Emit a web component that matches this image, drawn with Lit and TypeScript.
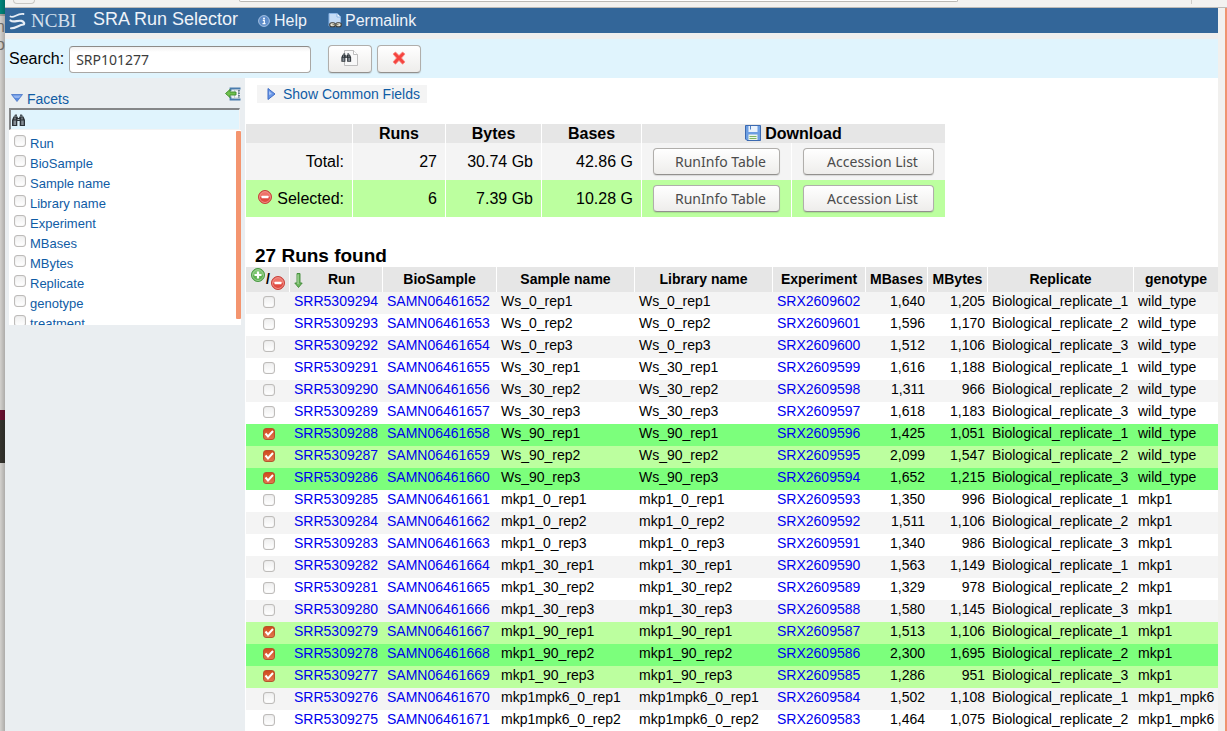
import { LitElement, html, css, svg } from "lit";
import { customElement, state } from "lit/decorators.js";
import { classMap } from "lit/directives/class-map.js";

interface Run {
  run: number;
  bio: number;
  name: string;
  exp: number;
  mbases: string;
  mbytes: string;
  rep: number;
  genotype: string;
}

const SIZES: [string, string][] = [
  ["1,640", "1,205"], ["1,596", "1,170"], ["1,512", "1,106"], ["1,616", "1,188"],
  ["1,311", "966"], ["1,618", "1,183"], ["1,425", "1,051"], ["2,099", "1,547"],
  ["1,652", "1,215"], ["1,350", "996"], ["1,511", "1,106"], ["1,340", "986"],
  ["1,563", "1,149"], ["1,329", "978"], ["1,580", "1,145"], ["1,513", "1,106"],
  ["2,300", "1,695"], ["1,286", "951"], ["1,502", "1,108"], ["1,464", "1,075"],
];
const GROUPS: [string, string][] = [
  ["Ws_0", "wild_type"], ["Ws_30", "wild_type"], ["Ws_90", "wild_type"],
  ["mkp1_0", "mkp1"], ["mkp1_30", "mkp1"], ["mkp1_90", "mkp1"], ["mkp1mpk6_0", "mkp1_mpk6"],
];
const RUNS: Run[] = SIZES.map(([mbases, mbytes], i) => {
  const [prefix, genotype] = GROUPS[Math.floor(i / 3)];
  const rep = (i % 3) + 1;
  return { run: 5309294 - i, bio: 6461652 + i, name: `${prefix}_rep${rep}`, exp: 2609602 - i, mbases, mbytes, rep, genotype };
});

const FACETS = ["Run", "BioSample", "Sample name", "Library name", "Experiment", "MBases", "MBytes", "Replicate", "genotype", "treatment"];

const binoculars = svg`
  <path d="M2.500 3.500h3v-2h-2zM8.500 1.500h2l1 2h-3z" fill="#4b545b"/>
  <path d="M2 3.500h4l.5 1.500h1L8 3.500h4l1.500 3.500v6H8.200V8H5.800v5H.5V7z" fill="#2d3338"/>
  <path d="M2 7.500h2.500V12H2zM9.700 7.500h2.500V12H9.700z" fill="#858d94"/>
  <path d="M3.500 4.500v2M10.500 4.500v2M6 6.500h2" stroke="#a9b1b7" fill="none"/>`;

const minusIcon = html`<svg class="round" viewBox="0 0 14 14" width="14" height="14" aria-hidden="true">
  <circle cx="7" cy="7" r="6.500" fill="#d9483f" stroke="#c8423b"/>
  <circle cx="7" cy="7" r="5.400" fill="#ee7369" stroke="#f4a19a" stroke-width=".8"/>
  <path d="M2 7a5 5 0 0 0 10 0z" fill="#e04a40"/>
  <rect x="3.500" y="5.700" width="7" height="2.600" rx=".5" fill="#fff"/>
</svg>`;

const plusIcon = html`<svg class="round" viewBox="0 0 14 14" width="14" height="14" aria-hidden="true">
  <circle cx="7" cy="7" r="6.500" fill="#58a84e" stroke="#4b9a44"/>
  <circle cx="7" cy="7" r="5.400" fill="#7cc46f" stroke="#abdca2" stroke-width=".8"/>
  <path d="M2 7a5 5 0 0 0 10 0z" fill="#5fb152"/>
  <path d="M7 3.500v7M3.500 7h7" stroke="#fff" stroke-width="2.200"/>
</svg>`;

@customElement("app-root")
export class AppRoot extends LitElement {
  @state() private selected = new Set([6, 7, 8, 15, 16, 17]);

  static styles = css`
    * { box-sizing: border-box; }
    :host {
      display: flex; height: 100vh; overflow: hidden; color: #000;
      font: 16px/18px "Liberation Sans", Arial, sans-serif; background: #fff;
    }
    .behind {
      flex: none; width: 5px; overflow: hidden; padding-top: 18px; color: #6d6c69;
      direction: rtl;
      background:
        linear-gradient(90deg, transparent, rgba(0,0,0,.18)),
        linear-gradient(#00857b 14px, #a5a39f 14px, #a5a39f 16px, #d3d1ce 16px, #d3d1ce 410px, #6b1030 410px, #6b1030 420px, #35342e 420px, #35342e 463px, #d3d1ce 463px);
    }
    .behind span { display: block; }
    .window { flex: 1; min-width: 0; display: flex; flex-direction: column; }
    .chrome {
      flex: none; height: 8px; background: #f3f2f0; border-bottom: 1px solid #bdbbb8;
      display: flex; overflow: hidden; align-items: flex-start;
    }
    .back { width: 22px; height: 4px; margin-left: 8px; border: 1px solid #c9c7c3; border-top: 0; border-radius: 0 0 11px 11px; }
    .address { flex: 1; height: 2px; margin: 0 233px 0 204px; background: #fff; border: 1px solid #bbb9b5; border-top: 0; border-radius: 0 0 3px 3px; }
    .divider { width: 1px; height: 4px; background: #cfcdca; margin-right: 35px; }
    .frame { flex: 1; min-height: 0; display: flex; }
    .page { flex: 1; min-width: 0; display: flex; flex-direction: column; background: #fff; }
    .gutter { flex: none; width: 9px; background: #f1f0ee; border-right: 2px solid #f0936f; }

    .top { flex: none; height: 25px; background: #369; color: #fff; display: flex; align-items: center; }
    .top a { color: #eef3f9; text-decoration: none; display: flex; align-items: center; }
    .top .brand { font: 19px/20px "Liberation Serif", serif; gap: 4px; padding-left: 4px; width: 88px; color: #d6e1ed; }
    .title { font-size: 18px; line-height: 22px; padding-bottom: 3px; width: 165px; color: #eef3f9; }
    .help { gap: 4px; width: 70px; }
    .perma { gap: 3px; }
    .search {
      flex: none; height: 45px; border-top: 6px solid #eee; background: #e0f4fd;
      display: flex; align-items: center; padding: 1px 4px 0; gap: 5px;
    }
    .query {
      width: 242px; height: 27px; padding: 1px 6px 0; border: 1px solid #a9a7a4; border-top-color: #8d8b88; border-radius: 4px;
      background: linear-gradient(#f1f1f1, #fff 5px); color: #3c3c3c; font: 14px/20px "Noto Sans", sans-serif; margin-right: 12px;
    }
    button { cursor: pointer; color: #4c4c4c; font: 14px/20px "Noto Sans", sans-serif; }
    .btn {
      border: 1px solid #b0aeab; border-bottom-color: #92908d; border-radius: 4px; padding: 0;
      background: linear-gradient(#fff, #eeedeb); box-shadow: 0 1px 1px rgba(0,0,0,.12);
    }
    .tool { width: 44px; height: 28px; display: flex; align-items: center; justify-content: center; padding-bottom: 3px; }
    .body { flex: 1; min-height: 0; display: flex; }

    .side { flex: none; width: 240px; background: #eaeef1; padding: 0 4px; }
    .plain { border: 0; background: none; padding: 0; color: #0f5ca5; font: 14px/18px "Liberation Sans", Arial, sans-serif; display: flex; align-items: center; }
    .facethead { height: 30px; display: flex; justify-content: space-between; padding: 10px 0 0 2px; }
    .facethead .plain { gap: 4px; height: 22px; }
    .facethead .collapse { height: 12px; }
    .filter { display: flex; align-items: center; height: 22px; width: 231px; background: #e0f4fd; border: 2px solid #848688; border-right: 1px solid #f3f3f3; border-bottom: 1px solid #f3f3f3; }
    .filter input { flex: 1; min-width: 0; border: 0; background: none; outline: 0; height: 17px; padding: 0; }
    .facets { display: flex; height: 195px; background: #fff; padding: 1px 0 0; overflow: hidden; }
    .list { flex: 1; list-style: none; margin: 0; padding: 2px 0 0 5px; color: #0f5ca5; font-size: 13px; line-height: 20px; }
    .list label { display: flex; gap: 4px; height: 20px; align-items: flex-start; }
    .list span { padding-top: 2px; line-height: 18px; }
    .thumb { width: 5px; height: 188px; background: #f4956f; border-radius: 1px; }

    .tick {
      appearance: none; flex: none; display: block; width: 12px; height: 12px; margin: 0; border: 1px solid #bebcba;
      border-radius: 3px; background: linear-gradient(#efefef, #fff); box-shadow: inset 0 0 1px #c4c2c0;
    }
    .list .tick { margin-top: 2px; }
    .tick:checked {
      border-color: #b5532c; box-shadow: none;
      background: url("data:image/svg+xml,%3Csvg xmlns='http://www.w3.org/2000/svg' viewBox='0 0 10 10'%3E%3Cpath d='M1.500 4.500l2.500 3L9 2' fill='none' stroke='%23fff' stroke-width='2'/%3E%3C/svg%3E") center / 10px no-repeat, linear-gradient(#d04a1c, #e27650);
    }

    .main { flex: 1; min-width: 0; padding: 7px 0 0 1px; }
    .common { background: #f4f4f4; height: 18px; margin-left: 11px; padding: 0 7px 0 10px; gap: 7px; }
    table { border-collapse: separate; border-spacing: 0; }
    th, td { padding: 0; }
    .summary { margin-top: 21px; table-layout: fixed; width: 699px; }
    .summary th { height: 19px; background: #e6e6e6; }
    .summary td { height: 37px; background: #f4f4f4; text-align: right; padding-right: 8px; }
    .summary th, .summary td { border-right: 1px solid #fff; }
    .summary th:last-child, .summary td:last-child { border-right: 0; }
    .summary .sel td { background: #bcff9f; }
    .summary .dl { padding: 0 11px; }
    .dl .btn { display: block; width: 100%; height: 27px; padding-left: 8px; }
    .lab { display: flex; align-items: center; justify-content: flex-end; gap: 5px; }
    .lab .icon { padding-bottom: 3px; }
    .disk { display: flex; justify-content: center; align-items: center; gap: 4px; }
    .disk svg { align-self: flex-start; }
    .icon { display: block; border: 0; background: none; padding: 0; }
    .icon svg, .round { display: block; }

    h2 { font-size: 19px; line-height: 22px; margin: 28px 0 0 9px; }
    .runs { table-layout: fixed; width: 100%; font-size: 14px; line-height: 19px; white-space: nowrap; }
    .runs th { height: 25px; background: #e6e6e6; border-right: 1px solid #fff; }
    .runs th:last-child { border-right: 0; }
    .runs td { height: 22px; padding: 0 3px 0 4px; vertical-align: top; }
    .runs tbody tr:nth-child(odd) { background: #f4f4f4; }
    .runs tbody tr.on:nth-child(odd) { background: #7cff7c; }
    .runs tbody tr.on:nth-child(even) { background: #bcff9f; }
    .runs a { color: #00e; text-decoration: none; }
    .runs .num { text-align: right; }
    .runs .box { padding: 4px 0 0 17px; }
    .toggle { display: flex; height: 25px; padding-left: 5px; gap: 1px; align-items: center; }
    .toggle .up { align-self: flex-start; padding-top: 1px; }
    .toggle .down { align-self: flex-end; padding-bottom: 2px; }
    .sort { display: flex; align-items: center; padding: 1px 0 0 4px; }
    .sort span { flex: 1; padding: 0 2px 1px 0; }
    .c0 { width: 44px; } .c1 { width: 93px; } .c2 { width: 114px; } .c3 { width: 138px; }
    .c4 { width: 62px; } .c5 { width: 60px; } .c6 { width: 146px; }
    .s0 { width: 107px; } .s1 { width: 93px; } .s2 { width: 96px; } .s3 { width: 100px; } .s4 { width: 150px; }
  `;

  private toggle(i: number) {
    const next = new Set(this.selected);
    if (next.has(i)) next.delete(i);
    else next.add(i);
    this.selected = next;
  }

  private header() {
    return html`
      <header class="top">
        <a class="brand" href="#"><svg width="18" height="20" viewBox="0 0 18 20" fill="none" stroke="#e6edf5" stroke-linecap="round" aria-hidden="true">
          <path d="M1.500 5.500C5 7.500 8 2 14.500 3" stroke-width="1.800"/>
          <path d="M1.500 9.500c3 2.600 7-.6 11 .4 2.200.6 3 2 2.500 3.200" stroke-width="2.200"/>
          <path d="M2 17.300c4 .6 8-3.400 12.500-3.800" stroke-width="2"/>
        </svg>NCBI</a>
        <div class="title">SRA Run Selector</div>
        <a class="help" href="#"><svg width="12" height="12" viewBox="0 0 12 12" aria-hidden="true">
          <circle cx="6" cy="6" r="5.400" fill="#5d8cc9" stroke="#a6c2e4"/><circle cx="6" cy="3.400" r="1" fill="#fff"/><path d="M4.800 5.300h1.500v3M4.500 8.700h3" stroke="#fff" stroke-width="1.200" fill="none"/>
        </svg>Help</a>
        <a class="perma" href="#"><svg width="14" height="15" viewBox="0 0 14 15" aria-hidden="true">
          <path d="M1 .5h8l3.500 3.500v9H1z" fill="#c5dcf6" stroke="#8ab4e4"/><path d="M9 .5V4h3.500" fill="#fff" stroke="#8ab4e4"/>
          <rect x="1.700" y="9.700" width="5.600" height="4" rx="2" fill="#e8e4d6" stroke="#3c3c38" stroke-width="1.100"/><rect x="7.700" y="9.700" width="5.600" height="4" rx="2" fill="#e8e4d6" stroke="#3c3c38" stroke-width="1.100"/><path d="M4.500 11.700H10.500" stroke="#77735f"/>
        </svg>Permalink</a>
      </header>
      <form class="search" @submit=${(e: Event) => e.preventDefault()}>
        <label for="q">Search:</label>
        <input class="query" id="q" type="text" value="SRP101277" />
        <button class="btn tool" aria-label="Search"><svg width="18" height="16" viewBox="0 0 18 16" aria-hidden="true">
          <path d="M3.500.5h9l4 4v11h-13z" fill="#f8f8f8" stroke="#bdbdbd"/><path d="M12.500.5v4h4" fill="#fff" stroke="#bdbdbd"/>
          <g transform="translate(0 2) scale(.75)">${binoculars}</g>
        </svg></button>
        <button class="btn tool" type="button" aria-label="Clear"><svg width="14" height="14" viewBox="0 0 14 14" aria-hidden="true">
          <path d="M1 3l2.500-2L7 4.500 10.500 1 13 3 9.500 7l3.500 4-2.500 2.200L7 9.500l-3.500 3.700L1 11l3.500-4z" fill="#f5443f" stroke="#f98a83" stroke-width=".8"/>
        </svg></button>
      </form>`;
  }

  private sidebar() {
    return html`
      <aside class="side">
        <div class="facethead">
          <button class="plain"><svg width="12" height="10" viewBox="0 0 12 10" aria-hidden="true"><path d="M.5.5h11L6 7.500z" fill="#5b8be0" stroke="#4a76c8" stroke-width=".8"/><path d="M2 1.500h8L8 4H4z" fill="#93b5f0"/></svg>Facets</button>
          <button class="plain collapse" aria-label="Collapse"><svg width="16" height="14" viewBox="0 0 16 14" aria-hidden="true">
            <path d="M5.500 4V1.500h10M5.500 9.500v3h10" fill="none" stroke="#4a7cae" stroke-width="1.800"/><path d="M9.500 3h4v8h-4z" fill="#f4f6f8" stroke="#c0cad3"/><path d="M14 3v8" stroke="#4d6478" stroke-width="1.500" stroke-dasharray="1.500 1"/>
            <path d="M.5 6.500L5 2.500V5h6v3H5v2.500z" fill="#6fc04d" stroke="#3f8d2c" stroke-width=".9"/>
          </svg></button>
        </div>
        <div class="filter"><svg width="15" height="14" viewBox="0 0 14 14" aria-hidden="true">${binoculars}</svg><input type="text" aria-label="Filter facets" /></div>
        <div class="facets">
          <ul class="list">
            ${FACETS.map((f) => html`<li><label><input class="tick" type="checkbox" /><span>${f}</span></label></li>`)}
          </ul>
          <div class="thumb"></div>
        </div>
      </aside>`;
  }

  private summary() {
    const buttons = html`
      <td class="dl"><button class="btn">RunInfo Table</button></td>
      <td class="dl"><button class="btn">Accession List</button></td>`;
    return html`
      <table class="summary">
        <colgroup><col class="s0" /><col class="s1" /><col class="s2" /><col class="s3" /><col class="s4" /><col /></colgroup>
        <thead><tr><th></th><th>Runs</th><th>Bytes</th><th>Bases</th>
          <th colspan="2"><div class="disk"><svg width="16" height="16" viewBox="0 0 16 16" aria-hidden="true">
            <path d="M.5.5h15v15H2l-1.500-1.500z" fill="#6c9ee2" stroke="#3b69b0"/><path d="M3.500 1h9v6h-9z" fill="#eaf2fc"/><path d="M5.500 1v3.500" stroke="#4f7fc4"/><path d="M3.500 9.500h9V15h-9z" fill="#eef6ea"/><path d="M4.500 11.500h7M4.500 13.500h7" stroke="#7bb463"/>
          </svg>Download</div></th></tr></thead>
        <tbody>
          <tr><td>Total:</td><td>27</td><td>30.74 Gb</td><td>42.86 G</td>${buttons}</tr>
          <tr class="sel"><td><div class="lab"><button class="icon" aria-label="Clear selection">${minusIcon}</button>Selected:</div></td><td>6</td><td>7.39 Gb</td><td>10.28 G</td>${buttons}</tr>
        </tbody>
      </table>`;
  }

  private runs() {
    return html`
      <table class="runs">
        <colgroup><col class="c0" /><col class="c1" /><col class="c2" /><col class="c3" /><col class="c3" /><col class="c1" /><col class="c4" /><col class="c5" /><col class="c6" /><col /></colgroup>
        <thead><tr>
          <th><div class="toggle"><button class="icon up" aria-label="Select all">${plusIcon}</button>/<button class="icon down" aria-label="Select none">${minusIcon}</button></div></th>
          <th><div class="sort"><svg width="9" height="15" viewBox="0 0 9 15" aria-hidden="true"><path d="M3 .5h3V10h2.200L4.500 14.500.8 10H3z" fill="#6fb760" stroke="#3f8a37" stroke-width=".9"/><path d="M4 1.500V11" stroke="#b5dfaa"/></svg><span>Run</span></div></th>
          <th>BioSample</th><th>Sample name</th><th>Library name</th><th>Experiment</th><th>MBases</th><th>MBytes</th><th>Replicate</th><th>genotype</th>
        </tr></thead>
        <tbody>
          ${RUNS.map((r, i) => html`<tr class=${classMap({ on: this.selected.has(i) })}>
            <td class="box"><input class="tick" type="checkbox" aria-label="SRR${r.run}" .checked=${this.selected.has(i)} @change=${() => this.toggle(i)} /></td>
            <td><a href="#">SRR${r.run}</a></td>
            <td><a href="#">SAMN0${r.bio}</a></td>
            <td>${r.name}</td><td>${r.name}</td>
            <td><a href="#">SRX${r.exp}</a></td>
            <td class="num">${r.mbases}</td><td class="num">${r.mbytes}</td>
            <td>Biological_replicate_${r.rep}</td><td>${r.genotype}</td>
          </tr>`)}
        </tbody>
      </table>`;
  }

  render() {
    return html`
      <div class="behind"><span>n</span><span>oo</span></div>
      <div class="window">
        <div class="chrome"><div class="back"></div><div class="address"></div><div class="divider"></div></div>
        <div class="frame">
          <div class="page">
            ${this.header()}
            <div class="body">
              ${this.sidebar()}
              <main class="main">
                <button class="plain common"><svg width="9" height="12" viewBox="0 0 9 12" aria-hidden="true"><path d="M1 .5L8 6l-7 5.500z" fill="#6a97e6" stroke="#3f6cc4"/><path d="M2 3l3 3-3 1z" fill="#a9c4f4"/></svg>Show Common Fields</button>
                ${this.summary()}
                <h2>27 Runs found</h2>
                ${this.runs()}
              </main>
            </div>
          </div>
          <div class="gutter"></div>
        </div>
      </div>`;
  }
}
